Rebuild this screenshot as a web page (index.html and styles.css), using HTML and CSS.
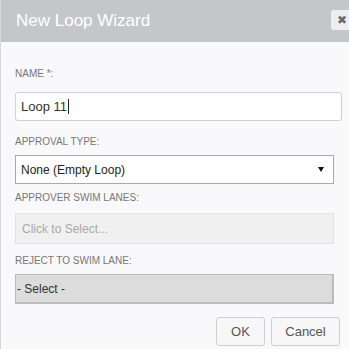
FILE: index.html
```html
<!DOCTYPE html>
<html>
<head>
<meta charset="utf-8">
<link rel="stylesheet" href="styles.css">
</head>
<body>
<div class="dialog">
  <div class="header">
    <span class="title">New Loop Wizard</span>
    <span class="close">&#x2716;</span>
  </div>
  <div class="content">
    <div class="label l-name">NAME *:</div>
    <div class="input"><span>Loop 11</span><span class="caret"></span></div>
    <div class="label l-type">APPROVAL TYPE:</div>
    <div class="select"><span>None (Empty Loop)</span><span class="arrow"></span></div>
    <div class="label l-lanes">APPROVER SWIM LANES:</div>
    <div class="multi">Click to Select...</div>
    <div class="label l-reject">REJECT TO SWIM LANE:</div>
    <div class="gselect">- Select -</div>
    <div class="buttons">
      <div class="btn ok">OK</div>
      <div class="btn cancel">Cancel</div>
    </div>
  </div>
</div>
</body>
</html>
```
FILE: styles.css
```css
html, body {
  margin: 0;
  padding: 0;
}
body {
  width: 349px;
  height: 349px;
  overflow: hidden;
  font-family: "Liberation Sans", Arial, sans-serif;
  background: #f9f9fb;
}
.dialog {
  width: 349px;
  height: 349px;
  box-sizing: border-box;
  border-left: 1px solid #d6d8da;
  display: flex;
  flex-direction: column;
}
.header {
  height: 42px;
  flex: none;
  background: #c3c7ca;
  display: flex;
  align-items: center;
  padding-left: 15px;
  box-sizing: border-box;
}
.title {
  color: #ffffff;
  font-size: 17px;
  line-height: 20px;
  margin-top: -1px;
}
.close {
  margin-left: auto;
  width: 18px;
  height: 20px;
  margin-top: -3px;
  background: #eceeef;
  border-radius: 3px 0 0 3px;
  color: #6a6a6a;
  font-size: 12px;
  display: flex;
  align-items: center;
  justify-content: center;
  box-sizing: border-box;
  padding-left: 3px;
}
.content {
  padding: 26px 7px 0 14px;
  display: flex;
  flex-direction: column;
}
.label {
  font-size: 10px;
  line-height: 12px;
  color: #777;
}
.l-name { margin-bottom: 12px; }
.l-type { margin-top: 15px; margin-bottom: 7px; }
.l-lanes { margin-top: 8px; margin-bottom: 9px; }
.l-reject { margin-top: 11px; margin-bottom: 7px; }
.input {
  height: 29px;
  box-sizing: border-box;
  border: 1px solid #d0d0d0;
  border-radius: 3px;
  background: #fff;
  display: flex;
  align-items: center;
  padding-left: 5px;
  font-size: 13px;
  color: #333;
}
.caret {
  width: 1px;
  height: 15px;
  background: #222;
  margin-left: 1px;
}
.select {
  width: 319px;
  height: 29px;
  box-sizing: border-box;
  border: 1px solid #aaa;
  background: #fff;
  display: flex;
  align-items: center;
  padding: 0 9px 0 5px;
  font-size: 12px;
  color: #222;
}
.arrow {
  margin-left: auto;
  width: 0;
  height: 0;
  border-left: 3px solid transparent;
  border-right: 3px solid transparent;
  border-top: 5px solid #111;
}
.multi {
  width: 319px;
  height: 31px;
  box-sizing: border-box;
  border: 1px solid #e2e2e2;
  background: #f0f0f0;
  display: flex;
  align-items: center;
  padding-left: 6px;
  font-size: 12px;
  color: #aaa;
}
.gselect {
  width: 319px;
  height: 30px;
  box-sizing: border-box;
  border: 1px solid #bbb;
  border-width: 1px 2px 2px 1px;
  background: #dcdcdc;
  display: flex;
  align-items: center;
  padding-left: 1px;
  font-size: 12px;
  color: #333;
}
.buttons {
  display: flex;
  justify-content: flex-end;
  gap: 6px;
  margin-top: 13px;
  padding-right: 2px;
}
.btn {
  height: 29px;
  box-sizing: border-box;
  border: 1px solid #d0d0d0;
  border-radius: 3px;
  background: #f7f7f7;
  display: flex;
  align-items: center;
  justify-content: center;
  font-size: 13px;
  color: #555;
}
.ok { width: 49px; }
.cancel { width: 69px; }
```
